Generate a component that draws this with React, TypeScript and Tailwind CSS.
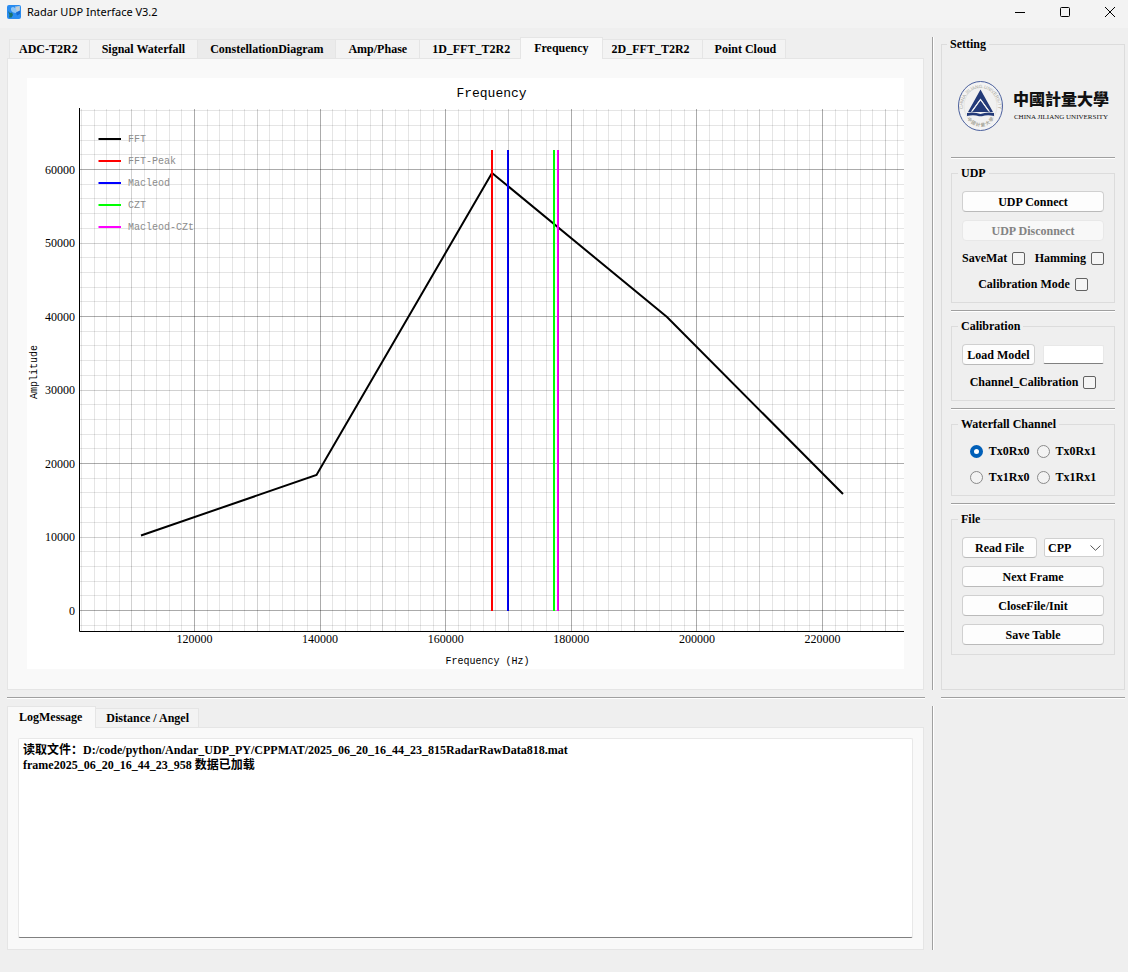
import { useState, type ReactNode } from "react";

const PLOT_TABS = [
  "ADC-T2R2",
  "Signal Waterfall",
  "ConstellationDiagram",
  "Amp/Phase",
  "1D_FFT_T2R2",
  "Frequency",
  "2D_FFT_T2R2",
  "Point Cloud",
];

const LOG_TABS = ["LogMessage", "Distance / Angel"];

const LOG_TEXT =
  "读取文件：D:/code/python/Andar_UDP_PY/CPPMAT/2025_06_20_16_44_23_815RadarRawData818.mat\n" +
  "frame2025_06_20_16_44_23_958 数据已加载";

// Plot scales: data value -> svg units
const px = (v: number) => 167.5 + ((v - 120000) * 125.6) / 20000;
const py = (v: number) => 532.5 - (v * 147) / 20000;

const range = (from: number, to: number, step: number) => {
  const out: number[] = [];
  for (let v = from; v <= to; v += step) out.push(v);
  return out;
};

const snap = (n: number) => Math.floor(n) + 0.5;

const lineOpacity = (v: number) => (v % 20000 === 0 ? 0.33 : v % 10000 === 0 ? 0.18 : 0.1);

const LEGEND = [
  { name: "FFT", color: "#000000" },
  { name: "FFT-Peak", color: "#ff0000" },
  { name: "Macleod", color: "#0000ff" },
  { name: "CZT", color: "#00ff00" },
  { name: "Macleod-CZt", color: "#ff00ff" },
];

const MARKERS = [
  { x: 465, color: "#ff0000" },
  { x: 481, color: "#0000ff" },
  { x: 527, color: "#00ff00" },
  { x: 531, color: "#ff00ff" },
];

function FrequencyChart() {
  const mono = "'Liberation Mono', monospace";
  const serif = "'Liberation Serif', serif";
  return (
    <svg
      viewBox="0 0 877 591"
      className="block h-auto w-full bg-white font-normal"
      role="img"
      aria-label="Frequency"
    >
      <text x="464.5" y="19" textAnchor="middle" fontFamily={mono} fontSize="13">
        Frequency
      </text>
      {range(-2000, 68000, 2000).map((v) => (
        <line key={v} x1="53" x2="877" y1={snap(py(v))} y2={snap(py(v))} stroke="#000" strokeOpacity={lineOpacity(v)} />
      ))}
      <polyline
        points="114,457.5 289.5,397 465,95 640,239 816,416"
        fill="none"
        stroke="#000"
        strokeWidth="2"
      />
      {MARKERS.map((m) => (
        <line key={m.color} x1={m.x} x2={m.x} y1="72" y2="533" stroke={m.color} strokeWidth="2" />
      ))}
      {range(102000, 232000, 2000).map((v) => (
        <line key={v} x1={snap(px(v))} x2={snap(px(v))} y1="31" y2="553" stroke="#000" strokeOpacity={lineOpacity(v)} />
      ))}
      <path d="M52.5 30V553.5H877" fill="none" stroke="#000" />
      {range(0, 60000, 10000).map((v) => (
        <text key={v} x="48" y={Math.round(py(v)) + 4} textAnchor="end" fontFamily={serif} fontSize="12">
          {v}
        </text>
      ))}
      {range(120000, 220000, 20000).map((v) => (
        <text key={v} x={px(v)} y="565" textAnchor="middle" fontFamily={serif} fontSize="12">
          {v}
        </text>
      ))}
      <text x="460.5" y="586" textAnchor="middle" fontFamily={mono} fontSize="10">
        Frequency (Hz)
      </text>
      <text transform="translate(10 294) rotate(-90)" textAnchor="middle" fontFamily={mono} fontSize="10">
        Amplitude
      </text>
      {LEGEND.map((item, i) => (
        <g key={item.name}>
          <line x1="71.5" x2="94" y1={61 + i * 22} y2={61 + i * 22} stroke={item.color} strokeWidth="2" />
          <text x="101" y={64 + i * 22} fill="#8c8c8c" fontFamily={mono} fontSize="10">
            {item.name}
          </text>
        </g>
      ))}
    </svg>
  );
}

function TabPane({
  tabs,
  initial,
  label,
  children,
}: {
  tabs: string[];
  initial: string;
  label: string;
  children: ReactNode;
}) {
  const [active, setActive] = useState(initial);

  const tabClass = (tab: string, i: number) => {
    const first = i === 0;
    const last = i === tabs.length - 1;
    if (tab === active) {
      const side = first ? "pl-[11px] pr-[13px] -mr-[2px]" : "px-[13px] -mx-[3px]";
      return `relative z-10 -mb-px h-[22px] border-l bg-[#f9f9f9] pb-[2px] ${side}`;
    }
    const side = first ? "border-l pl-[9px] pr-[11px]" : last ? "pl-3 pr-[9px]" : "px-3";
    const fill = tab === "ConstellationDiagram" ? "bg-[#ebebeb]" : "bg-[#f3f3f3] hover:bg-[#ebebeb]";
    return `h-[19px] ${side} ${fill}`;
  };

  return (
    <section className="mr-px flex min-w-0 flex-col">
      <div
        role="tablist"
        aria-label={label}
        className={`flex h-[21px] items-end ${active === tabs[0] ? "" : "pl-[2px]"}`}
      >
        {tabs.map((tab, i) => (
          <button
            key={tab}
            type="button"
            role="tab"
            aria-selected={tab === active}
            onClick={() => setActive(tab)}
            className={`border-t border-r border-[#e5e5e5] whitespace-nowrap ${tabClass(tab, i)}`}
          >
            {tab}
          </button>
        ))}
      </div>
      <div role="tabpanel" className="flex flex-1 flex-col border border-[#e5e5e5] bg-[#f9f9f9]">
        {active === initial && children}
      </div>
    </section>
  );
}

function Group({ title, children }: { title: string; children: ReactNode }) {
  return (
    <fieldset className="min-w-0 border border-[#dcdcdc] px-[10px] pb-[9px]">
      <legend className="-ml-1 h-[14px] px-[3px] leading-[14px]">{title}</legend>
      <div className="flex flex-col gap-2 pt-[11px]">{children}</div>
    </fieldset>
  );
}

function HLine() {
  return <div className="h-[2px] border-t border-[#a0a0a0] bg-white" />;
}

function VLine() {
  return <div className="w-[2px] border-l border-[#a0a0a0] bg-white" />;
}

function PushButton({
  children,
  disabled,
  className = "",
}: {
  children: ReactNode;
  disabled?: boolean;
  className?: string;
}) {
  return (
    <button
      type="button"
      disabled={disabled}
      className={`h-[21px] rounded-[4px] border border-[#d0d0d0] border-b-[#bababa] bg-[#fdfdfd] whitespace-nowrap disabled:border-[#e8e8e8] disabled:bg-[#f8f8f8] disabled:text-[#838383] ${className}`}
    >
      {children}
    </button>
  );
}

function Check({ label }: { label: string }) {
  return (
    <label className="flex h-[18px] items-center gap-[5px] whitespace-nowrap">
      {label}
      <input
        type="checkbox"
        className="size-[13px] appearance-none rounded-[2px] border border-[#626262] bg-[#f5f5f5] checked:bg-[#005fb8]"
      />
    </label>
  );
}

function Radio({ label, checked }: { label: string; checked?: boolean }) {
  return (
    <label className="flex h-[18px] items-center gap-[6px] whitespace-nowrap">
      <input
        type="radio"
        name="channel"
        defaultChecked={checked}
        className="size-[13px] appearance-none rounded-full border border-[#8a8a8a] bg-[#f3f3f3] checked:border-4 checked:border-[#005fb8] checked:bg-white"
      />
      {label}
    </label>
  );
}

function UniversityLogo() {
  return (
    <div className="flex items-center justify-between pt-[30px] pr-[6px] pb-[19px] pl-[7px]">
      <svg viewBox="0 0 45 50" className="h-[50px] w-[45px] shrink-0" aria-hidden="true">
        <defs>
          <path id="sealTop" d="M5.6 33A17.8 19.8 0 1 1 39.4 33" />
          <path id="sealBottom" d="M7 34A17.5 21.5 0 0 0 38 34" />
        </defs>
        <ellipse cx="22.5" cy="25" rx="22" ry="24.5" fill="#f3f3f3" stroke="#4a5f9c" />
        <ellipse cx="22.5" cy="25" rx="16.5" ry="18.5" fill="#f1f1f1" stroke="#dddcd6" strokeWidth="0.6" />
        <text fontFamily="'Liberation Sans', sans-serif" fontSize="4.6" fontWeight="400" fill="#aaa99f">
          <textPath href="#sealTop" startOffset="50%" textAnchor="middle">
            CHINA JILIANG UNIVERSITY
          </textPath>
        </text>
        <text fontFamily="'Noto Sans CJK TC', sans-serif" fontSize="4.5" fontWeight="700" fill="#a9a89c">
          <textPath href="#sealBottom" startOffset="50%" textAnchor="middle">
            中 國 計 量 大 學
          </textPath>
        </text>
        <path
          fill="#233a78"
          fillRule="evenodd"
          d="M22.5 8.5L35 31H10Z M22.5 17.5L13.2 30.2H14.8L22.5 19.6L30.2 30.2H31.8Z"
        />
        <path d="M22.5 18.4L13.6 30.8M22.5 18.4L31.4 30.8" stroke="#f3f3f3" strokeWidth="1" fill="none" />
        <path
          fill="#233a78"
          d="M9 32Q16 30.5 22.5 33Q29 30.5 36 32V35Q29 33.5 24 35.3H21Q16 33.5 9 35Z"
        />
      </svg>
      <div className="flex flex-col items-center gap-[2px] whitespace-nowrap text-[#111]">
        <span className="font-['Noto_Sans_CJK_TC',sans-serif] text-[16px] leading-[20px] font-black">
          中國計量大學
        </span>
        <span className="text-[7px] leading-[14px] font-normal">CHINA JILIANG UNIVERSITY</span>
      </div>
    </div>
  );
}

function TitleBar() {
  return (
    <header className="flex h-[28px] items-center bg-[#f3f3f3] pr-[13px] pb-1 pl-[7px] font-['Noto_Sans',sans-serif] text-[11px] font-normal">
      <svg viewBox="0 0 14 14" className="mr-[6px] size-[14px]" aria-hidden="true">
        <rect width="14" height="14" rx="2" fill="#2a8cf0" />
        <path d="M4 3Q6 1 8 3L11 1H13V6L9 8Q5 8 4 5Z" fill="#8cc4f4" />
        <path d="M8 1.5H12.5V5.5L10 6.5Z" fill="#c4cdd4" />
        <path d="M1 6L3 8L5 7.5L6 10L4.5 12.5H2L2.5 10Z" fill="#18726e" />
        <path d="M9 7.5L13 5.5V9L10 10.5Z" fill="#1669cf" />
      </svg>
      <h1 className="flex-1">Radar UDP Interface V3.2</h1>
      <div className="flex gap-[35px]">
        <button type="button" aria-label="Minimize">
          <svg viewBox="0 0 10 10" className="size-[10px]" stroke="#000" fill="none">
            <path d="M0 5.5H10" />
          </svg>
        </button>
        <button type="button" aria-label="Maximize">
          <svg viewBox="0 0 10 10" className="size-[10px]" stroke="#000" fill="none">
            <rect x="0.5" y="0.5" width="9" height="9" rx="1" />
          </svg>
        </button>
        <button type="button" aria-label="Close">
          <svg viewBox="0 0 10 10" className="size-[10px]" stroke="#000" fill="none">
            <path d="M0 0L10 10M10 0L0 10" />
          </svg>
        </button>
      </div>
    </header>
  );
}

function Settings() {
  return (
    <fieldset className="min-w-0 border border-[#dcdcdc] px-[9px]">
      <legend className="-ml-1 h-[14px] px-[3px] leading-[14px]">Setting</legend>
      <div className="flex flex-col gap-[7px] pb-[34px]">
        <UniversityLogo />
        <HLine />
        <Group title="UDP">
          <PushButton>UDP Connect</PushButton>
          <PushButton disabled>UDP Disconnect</PushButton>
          <div className="flex justify-between">
            <Check label="SaveMat" />
            <Check label="Hamming" />
          </div>
          <div className="flex justify-center">
            <Check label="Calibration Mode" />
          </div>
        </Group>
        <HLine />
        <Group title="Calibration">
          <div className="flex items-center gap-2">
            <PushButton className="w-[73px] shrink-0">Load Model</PushButton>
            <input
              type="text"
              aria-label="Model"
              className="h-[19px] w-full min-w-0 rounded-[2px] border border-[#e8e8e8] border-b-[#808080] bg-white px-1"
            />
          </div>
          <div className="flex justify-center">
            <Check label="Channel_Calibration" />
          </div>
        </Group>
        <HLine />
        <Group title="Waterfall Channel">
          <div className="grid grid-cols-[auto_auto] justify-center gap-x-[7px] gap-y-2">
            <Radio label="Tx0Rx0" checked />
            <Radio label="Tx0Rx1" />
            <Radio label="Tx1Rx0" />
            <Radio label="Tx1Rx1" />
          </div>
        </Group>
        <HLine />
        <Group title="File">
          <div className="flex items-center gap-[7px]">
            <PushButton className="w-[75px] shrink-0">Read File</PushButton>
            <div className="relative flex-1">
              <select
                aria-label="File type"
                className="block h-[19px] w-full appearance-none rounded-[2px] border border-[#d0d0d0] bg-white pl-[3px]"
              >
                <option>CPP</option>
              </select>
              <svg
                viewBox="0 0 11 6"
                className="pointer-events-none absolute top-[7px] right-[3px] h-[6px] w-[11px]"
                fill="none"
                stroke="#555"
                aria-hidden="true"
              >
                <path d="M0.5 0.5L5.5 5.3L10.5 0.5" />
              </svg>
            </div>
          </div>
          <PushButton>Next Frame</PushButton>
          <PushButton>CloseFile/Init</PushButton>
          <PushButton>Save Table</PushButton>
        </Group>
      </div>
    </fieldset>
  );
}

export default function App() {
  return (
    <div className="flex min-h-screen flex-col bg-[#efefef] font-['Liberation_Serif','Noto_Sans_CJK_SC',serif] text-[12px] leading-[16px] font-bold text-black">
      <TitleBar />
      <main className="grid flex-1 grid-cols-[minmax(0,1fr)_2px_184px] grid-rows-[auto_2px_1fr] gap-[7px] pt-[9px] pr-[3px] pb-[22px] pl-[7px]">
        <TabPane tabs={PLOT_TABS} initial="Frequency" label="Plots">
          <div className="px-[19px] pt-[19px] pb-[20px]">
            <FrequencyChart />
          </div>
        </TabPane>
        <VLine />
        <Settings />

        <HLine />
        <div />
        <HLine />

        <TabPane tabs={LOG_TABS} initial="LogMessage" label="Messages">
          <textarea
            readOnly
            aria-label="Log"
            defaultValue={LOG_TEXT}
            className="mx-[10px] mt-[10px] mb-[11px] block min-h-[120px] flex-1 resize-none rounded-[2px] border border-[#e8e8e8] border-b-[#808080] bg-white p-1 leading-[15px] outline-none"
          />
        </TabPane>
        <VLine />
      </main>
    </div>
  );
}
